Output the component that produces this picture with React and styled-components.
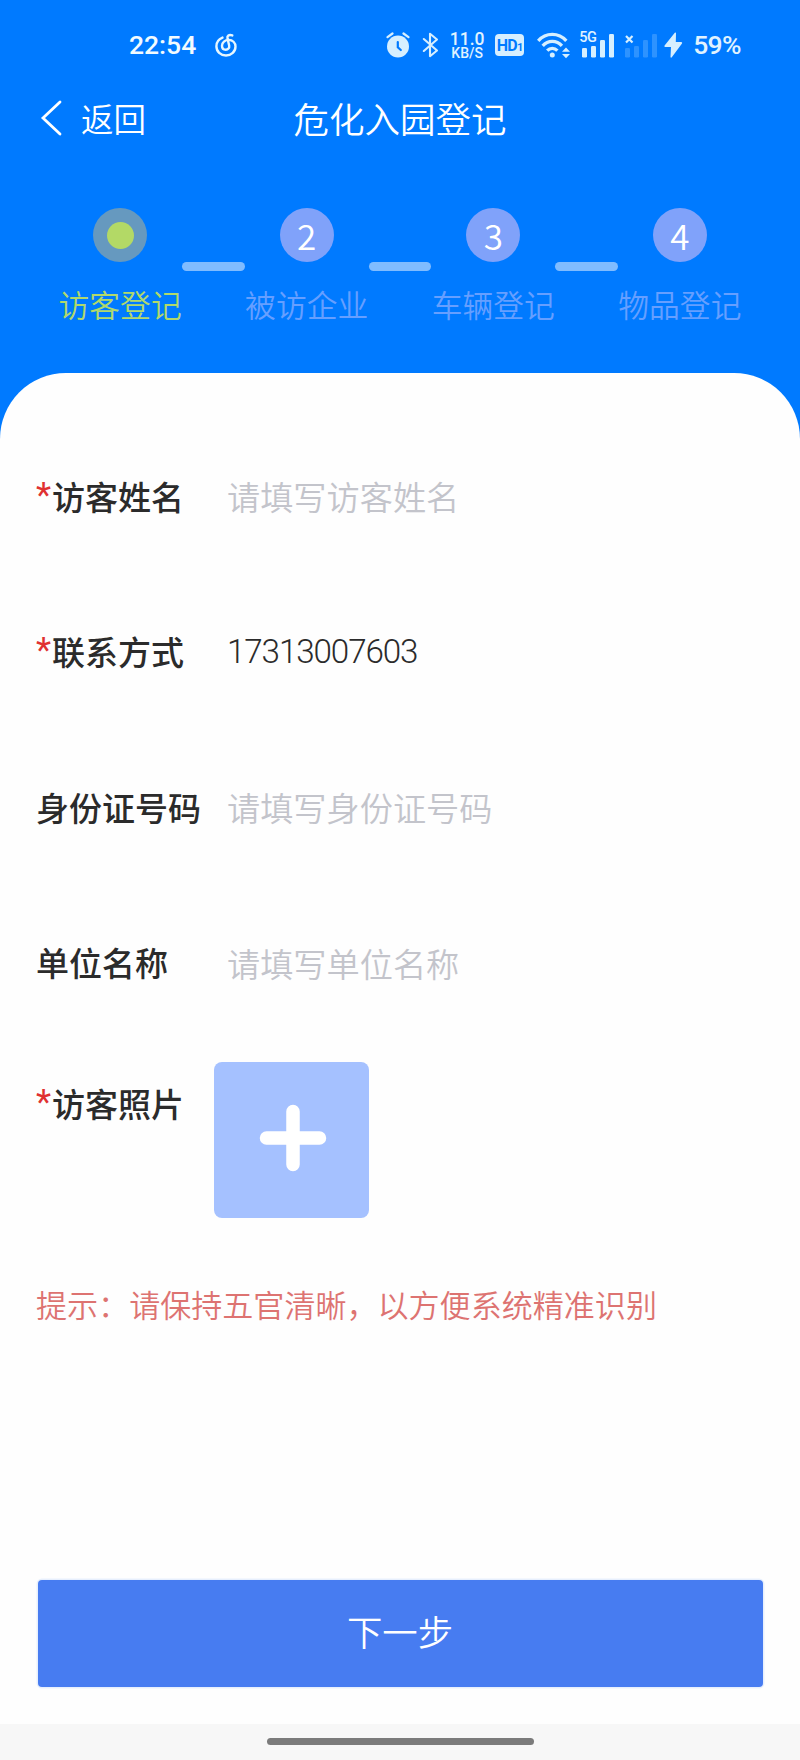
import React, { useState } from "react";
import styled, { createGlobalStyle } from "styled-components";

const GlobalStyle = createGlobalStyle`
  * {
    box-sizing: border-box;
  }
  body {
    margin: 0;
    background: #007aff;
    font-family: "Noto Sans CJK SC", sans-serif;
  }
`;

const Page = styled.div`
  display: flex;
  flex-direction: column;
  width: 800px;
  height: 1760px;
  background: #007aff;
  overflow: hidden;
`;

// status bar

const StatusBar = styled.div`
  display: flex;
  align-items: center;
  justify-content: space-between;
  height: 90px;
  padding: 0 59px 0 129px;
  color: #e0f3ff;
  font-family: Roboto, sans-serif;
  font-weight: 500;
  font-size: 26.5px;
  line-height: 32px;
`;
const StatusGroup = styled.div`
  display: flex;
  align-items: center;
  gap: ${(props) => props.$gap || 0}px;
`;
const Time = styled.span`
  color: #f2fbff;
`;
const Speed = styled.div`
  display: flex;
  flex-direction: column;
  align-items: center;
  width: 34px;
  margin: 0 11px;
  font-size: 17.5px;
  line-height: 15px;
  white-space: nowrap;
`;
const SpeedUnit = styled.span`
  font-size: 14px;
  line-height: 12px;
`;
const HdBadge = styled.div`
  display: flex;
  align-items: baseline;
  justify-content: center;
  width: 29px;
  height: 22px;
  margin-right: 13px;
  border-radius: 4px;
  background: #d6efff;
  color: #007aff;
  font-size: 16px;
  font-weight: 700;
  line-height: 23px;
  letter-spacing: -0.8px;
`;
const HdIndex = styled.span`
  font-size: 11px;
`;
const Percent = styled.span`
  margin-left: 10px;
  letter-spacing: -0.6px;
`;
const StatusIcon = styled.svg`
  flex: none;
  display: block;
`;

// header

const Header = styled.div`
  display: grid;
  grid-template-columns: 1fr auto 1fr;
  align-items: center;
  height: 56px;
  margin-bottom: 2px;
  padding: 0 40px;
  color: #fff;
`;
const BackButton = styled.div`
  display: flex;
  align-items: center;
  gap: 18px;
  font-size: 32.5px;
  font-weight: 350;
  line-height: 48px;
`;
const Title = styled.div`
  font-size: 35.5px;
  font-weight: 350;
  line-height: 52px;
`;

// steps

const Steps = styled.div`
  display: flex;
  justify-content: center;
  height: 225px;
  padding-top: 60px;
`;
const Step = styled.div`
  display: flex;
  flex-direction: column;
  align-items: center;
  width: 124.4px;
`;
const StepCircle = styled.div`
  display: flex;
  align-items: center;
  justify-content: center;
  width: 54px;
  height: 54px;
  border-radius: 50%;
  background: ${(props) => (props.$active ? "#6699bf" : "#80a2fa")};
  color: #fff;
  font-family: "Noto Sans CJK SC", sans-serif;
  font-size: 35px;
  font-weight: 350;
  line-height: 52px;
`;
const StepDot = styled.div`
  width: 27px;
  height: 27px;
  border-radius: 50%;
  background: #b3d966;
`;
const StepLabel = styled.div`
  margin-top: 19px;
  color: ${(props) => (props.$active ? "#b0d96c" : "#669fff")};
  font-size: 30.8px;
  font-weight: 350;
  line-height: 46px;
  white-space: nowrap;
`;
const StepLine = styled.div`
  width: 62.2px;
  height: 9px;
  margin-top: 54px;
  border-radius: 5px;
  background: #80bcff;
`;

// form

const Card = styled.div`
  display: flex;
  flex-direction: column;
  flex: 1;
  padding: 45px 37px 0;
  border-radius: 66px 66px 0 0;
  background: #fefefe;
`;
const Field = styled.div`
  display: flex;
  align-items: center;
  height: 155.5px;
`;
const PhotoField = styled.div`
  display: flex;
  align-items: flex-start;
  margin-top: 22px;
`;
const Label = styled.label`
  display: flex;
  align-items: center;
  width: 191px;
  margin-left: -1px;
  color: #2b2b2b;
  font-size: 33px;
  font-weight: 500;
  line-height: 48px;
  white-space: nowrap;
`;
const PhotoLabel = styled(Label)`
  width: 177.5px;
  margin-top: 17px;
`;
const Required = styled.span`
  width: 16px;
  color: #e03131;
  font-family: Roboto, sans-serif;
  font-size: 35px;
  font-weight: 400;
`;
const Input = styled.input`
  flex: 1;
  min-width: 0;
  height: 60px;
  padding: 0;
  border: 0;
  outline: 0;
  background: transparent;
  color: #2b2b2b;
  font-family: ${(props) => (props.$digits ? "Roboto," : "")}
    "Noto Sans CJK SC", sans-serif;
  font-size: 33.2px;
  font-weight: ${(props) => (props.$digits ? 300 : 350)};
  letter-spacing: ${(props) => (props.$digits ? "-1.1px" : "0")};
  &::placeholder {
    color: #c3c4cb;
    opacity: 1;
  }
`;
const Upload = styled.div`
  display: flex;
  align-items: center;
  justify-content: center;
  width: 155.5px;
  height: 155.5px;
  padding: 0 0 3px 4px;
  border-radius: 8px;
  background: #a5c1ff;
`;
const Hint = styled.div`
  margin-top: 63px;
  margin-left: -1px;
  color: #dd7371;
  font-size: 31.05px;
  font-weight: 350;
  line-height: 46px;
  white-space: nowrap;
`;
const NextButton = styled.button`
  width: 725px;
  height: 107px;
  margin: auto 0 37px 0.5px;
  padding: 0 0 5px;
  border: 0;
  border-radius: 4px;
  background: #477cf1;
  box-shadow: 0 0 0 1.5px #e7effd;
  color: #fff;
  font-family: "Noto Sans CJK SC", sans-serif;
  font-size: 35.4px;
  font-weight: 350;
  line-height: 52px;
`;

const NavBar = styled.div`
  display: flex;
  justify-content: center;
  height: 36px;
  padding-top: 13.5px;
  background: #f7f7f7;
`;
const NavPill = styled.div`
  width: 267px;
  height: 7px;
  border-radius: 4px;
  background: #7b7b7b;
`;

const steps = ["访客登记", "被访企业", "车辆登记", "物品登记"];

const fields = [
  { key: "name", label: "访客姓名", required: true },
  { key: "phone", label: "联系方式", required: true },
  { key: "idCard", label: "身份证号码" },
  { key: "company", label: "单位名称" },
];

const MusicIcon = () => (
  <StatusIcon width="22" height="24" viewBox="0 0 22 24" fill="none" stroke="#e6f7ff" strokeWidth="2.4" strokeLinecap="round">
    <path d="M7.5 4.6C3.7 6.2 1.4 9.3 1.4 13.2C1.4 18.7 5.6 22.5 11 22.5C16.4 22.5 20.5 18.6 20.5 13.6C20.5 9.6 17.5 6.9 13.8 6.9C10 6.9 7 9.4 7 12.7C7 15.2 8.7 16.7 10.8 16.7C13 16.7 14.6 15 14.2 12.8L12.5 5.5C11.9 2.9 13.8 1.3 17.3 2.4" />
  </StatusIcon>
);

const AlarmIcon = () => (
  <StatusIcon width="24" height="26" viewBox="0 0 24 26" fill="none">
    <circle cx="12" cy="14.5" r="11" fill="#d6efff" />
    <path d="M1.5 5.2L6.5 1.5M17.5 1.5L22.5 5.2" stroke="#d6efff" strokeWidth="2.2" strokeLinecap="round" />
    <path d="M11.8 10V15.2L14.8 18" stroke="#007aff" strokeWidth="2.2" strokeLinecap="round" />
  </StatusIcon>
);

const Bluetooth = styled(StatusIcon)`
  margin-left: 12px;
`;

const BluetoothIcon = () => (
  <Bluetooth width="17" height="26" viewBox="0 0 17 26" fill="none" stroke="#d6efff" strokeWidth="2.1" strokeLinejoin="round" strokeLinecap="round">
    <path d="M1.8 7L15 18.5L8 24.2V1.8L15 7.5L1.8 19" />
  </Bluetooth>
);

const WifiIcon = () => (
  <StatusIcon width="34" height="27" viewBox="0 0 34 27" fill="none" stroke="#d6efff" strokeWidth="3.3">
    <path d="M1.2 8.8C9 .2 21.5 .2 29.3 8.8" />
    <path d="M5.7 13.8C11 8 19.6 8 24.9 13.8" />
    <path d="M10.2 18.6C13.2 15.5 17.4 15.5 20.4 18.6" />
    <circle cx="15.3" cy="23" r="2.5" fill="#d6efff" stroke="none" />
    <path d="M25 19.7L29 15.5L33 19.7ZM25 22L29 26.3L33 22Z" fill="#d6efff" stroke="none" />
  </StatusIcon>
);

const Network = styled.div`
  position: relative;
  margin-left: ${(props) => props.$left}px;
`;
const NetworkType = styled.span`
  position: absolute;
  left: -3px;
  top: -1px;
  font-size: 14.5px;
  line-height: 14px;
  letter-spacing: -0.5px;
`;

const Bars = ({ off }) => (
  <StatusIcon width="32" height="26" viewBox="0 0 32 26" fill={off ? "#2e93ff" : "#d6efff"}>
    <rect x="0" y="16" width="5" height="9.5" rx="1.2" />
    <rect x="9" y="14" width="5" height="11.5" rx="1.2" />
    <rect x="18" y="8" width="5" height="17.5" rx="1.2" />
    <rect x="27" y="2" width="5" height="23.5" rx="1.2" />
    {off ? <path d="M1 4L7.5 10.5M7.5 4L1 10.5" stroke="#d6efff" strokeWidth="2.2" /> : null}
  </StatusIcon>
);

const Bolt = styled(StatusIcon)`
  margin-left: 7px;
`;

const BoltIcon = () => (
  <Bolt width="19" height="26" viewBox="0 0 19 26" fill="#d6efff">
    <path d="M10.8 .8L.6 13.5C.2 14.3 .5 15 1.3 15H7L6.5 25C6.6 25.8 7.3 25.9 7.8 25.3L18 11.6C18.4 10.8 18 10 17.200 10H11.8L12 1.2C12 .3 11.3 .2 10.8 .8Z" />
  </Bolt>
);

const App = () => {
  const [form, setForm] = useState({
    name: "",
    phone: "17313007603",
    idCard: "",
    company: "",
  });
  const current = 0;

  return (
    <Page>
      <GlobalStyle />
      <StatusBar>
        <StatusGroup $gap={19}>
          <Time>22:54</Time>
          <MusicIcon />
        </StatusGroup>
        <StatusGroup>
          <AlarmIcon />
          <BluetoothIcon />
          <Speed>
            11.0
            <SpeedUnit>KB/S</SpeedUnit>
          </Speed>
          <HdBadge>
            HD<HdIndex>1</HdIndex>
          </HdBadge>
          <WifiIcon />
          <Network $left={11}>
            <NetworkType>5G</NetworkType>
            <Bars />
          </Network>
          <Network $left={11}>
            <Bars off />
          </Network>
          <BoltIcon />
          <Percent>59%</Percent>
        </StatusGroup>
      </StatusBar>

      <Header>
        <BackButton>
          <svg width="23" height="38" viewBox="0 0 23 38" fill="none" stroke="#fff" strokeWidth="2.8" strokeLinecap="round">
            <path d="M20 3L3 19L20 35" />
          </svg>
          返回
        </BackButton>
        <Title>危化入园登记</Title>
      </Header>

      <Steps>
        {steps.map((label, i) => (
          <React.Fragment key={label}>
            {i > 0 ? <StepLine /> : null}
            <Step>
              <StepCircle $active={i === current}>
                {i === current ? <StepDot /> : i + 1}
              </StepCircle>
              <StepLabel $active={i === current}>{label}</StepLabel>
            </Step>
          </React.Fragment>
        ))}
      </Steps>

      <Card>
        {fields.map((field) => (
          <Field key={field.key}>
            <Label htmlFor={field.key}>
              {field.required ? <Required>*</Required> : null}
              {field.label}
            </Label>
            <Input
              id={field.key}
              $digits={field.key === "phone"}
              value={form[field.key]}
              placeholder={`请填写${field.label}`}
              onChange={(e) =>
                setForm({ ...form, [field.key]: e.target.value })
              }
            />
          </Field>
        ))}
        <PhotoField>
          <PhotoLabel as="div">
            <Required>*</Required>
            访客照片
          </PhotoLabel>
          <Upload>
            <svg width="68" height="68" viewBox="0 0 68 68" stroke="#fff" strokeWidth="13.5" strokeLinecap="round">
              <path d="M34 7.5V60.5M7.5 34H60.5" />
            </svg>
          </Upload>
        </PhotoField>
        <Hint>提示：请保持五官清晰，以方便系统精准识别</Hint>
        <NextButton type="button">下一步</NextButton>
      </Card>
      <NavBar>
        <NavPill />
      </NavBar>
    </Page>
  );
};

export default App;
